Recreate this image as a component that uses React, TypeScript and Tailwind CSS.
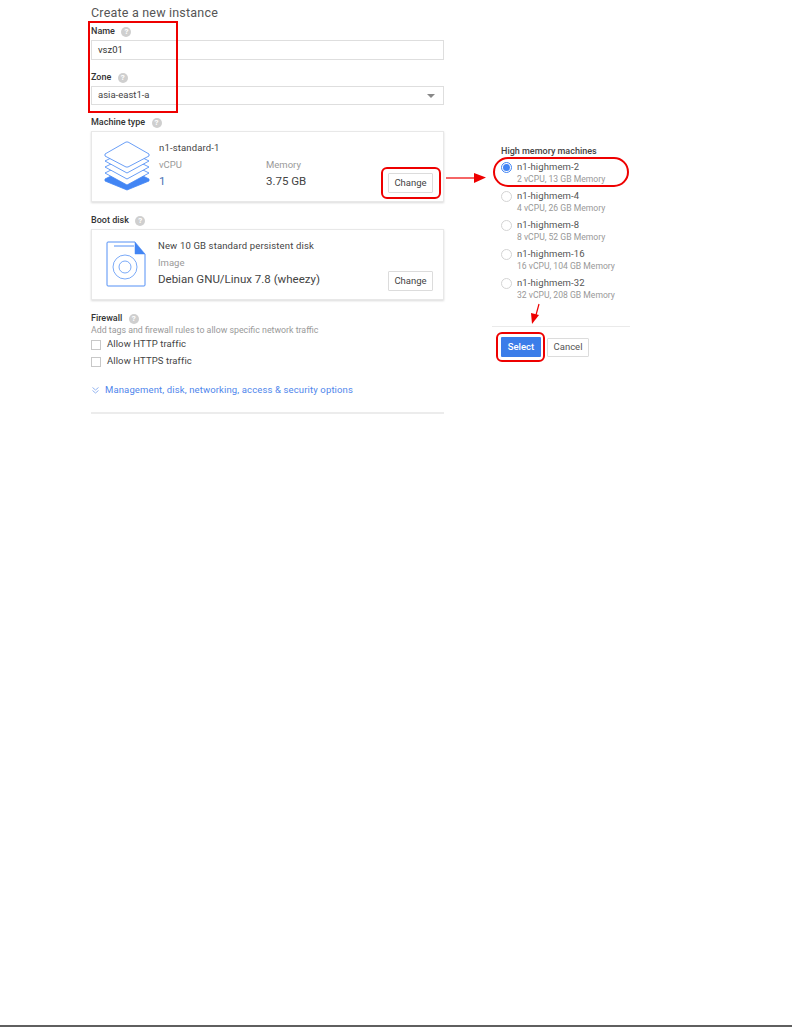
const FONT = "font-['Roboto',sans-serif]"

function Help() {
  return (
    <span className="flex size-[10px] items-center justify-center rounded-full bg-[#cfcfcf] text-[8px] leading-none font-bold text-white">
      ?
    </span>
  )
}

function FieldLabel({ text }: { text: string }) {
  return (
    <div className="flex h-[14px] items-center gap-[6.5px] pt-[2px] text-[9px] font-medium text-[#333]">
      <span>{text}</span>
      <Help />
    </div>
  )
}

function ChangeButton() {
  return (
    <button className="flex h-[20px] w-[45px] items-center justify-center rounded-[1px] border border-[#dcdcdc] bg-white text-[9.5px] text-[#444]">
      Change
    </button>
  )
}

function LayersIcon() {
  return (
    <svg width="46" height="50" viewBox="0 0 46 50" fill="none" stroke="#4285f4" strokeWidth="0.8" strokeLinejoin="round">
      <path d="M1 38 L23 27 L45 38 L45 40 L23 49 L1 40 Z" fill="#4285f4" />
      <path d="M1 32 L23 21 L45 32 L23 44 Z" fill="#fff" />
      <path d="M1 26 L23 15 L45 26 L23 38 Z" fill="#fff" />
      <path d="M1 20 L23 9 L45 20 L23 32 Z" fill="#fff" />
      <path d="M1 13 L22 1 L24 1 L45 13 L45 15 L24 26 L22 26 L1 15 Z" fill="#fff" />
    </svg>
  )
}

function DiskIcon() {
  return (
    <svg width="40" height="46" viewBox="0 0 40 46" fill="none" stroke="#4285f4">
      <path d="M29 1 L2 1 Q1 1 1 2 L1 44 Q1 45 2 45 L38 45 Q39 45 39 44 L39 13" strokeWidth="0.9" />
      <path d="M8 5 L28 5" strokeWidth="0.9" />
      <path d="M29 1 L39 13 L29 13 Z" fill="#4285f4" strokeWidth="0.5" />
      <circle cx="19" cy="26" r="12" strokeWidth="0.7" />
      <circle cx="19" cy="26" r="6" strokeWidth="0.7" />
    </svg>
  )
}

function Checkbox({ label }: { label: string }) {
  return (
    <div className="flex h-[11px] items-center gap-[6px] text-[9.5px] tracking-[0.1px] text-[#444]">
      <span className="size-[10px] border border-[#c8c8c8] bg-white" />
      <span>{label}</span>
    </div>
  )
}

const MACHINES = [
  { name: "n1-highmem-2", spec: "2 vCPU, 13 GB Memory", on: true },
  { name: "n1-highmem-4", spec: "4 vCPU, 26 GB Memory", on: false },
  { name: "n1-highmem-8", spec: "8 vCPU, 52 GB Memory", on: false },
  { name: "n1-highmem-16", spec: "16 vCPU, 104 GB Memory", on: false },
  { name: "n1-highmem-32", spec: "32 vCPU, 208 GB Memory", on: false },
]

export default function App() {
  return (
    <div className={`relative flex h-[1027px] w-[792px] overflow-hidden border-b-2 border-[#5f5f5f] bg-white ${FONT}`}>
      {/* left column: the form */}
      <div className="ml-[91px] flex w-[353px] flex-col pt-[5px]">
        <h1 className="h-[17px] text-[12.5px] leading-[16px] font-normal tracking-[0.2px] text-[#555]">Create a new instance</h1>
        <div className="mt-[2px]"><FieldLabel text="Name" /></div>
        <div className="mt-[2px] flex h-[20px] items-center border border-[#dedede] px-[6px] text-[9.5px] text-[#333]">vsz01</div>
        <div className="mt-[10px]"><FieldLabel text="Zone" /></div>
        <div className="mt-[2px] flex h-[19px] items-center justify-between border border-[#dedede] pr-[8px] pl-[6px] text-[9.5px] text-[#444]">
          <span>asia-east1-a</span>
          <span className="size-0 border-x-[4px] border-t-[4px] border-x-transparent border-t-[#888]" />
        </div>
        <div className="mt-[10px]"><FieldLabel text="Machine type" /></div>
        <div className="mt-[2px] flex h-[71px] border border-[#e8e8e8] shadow-[0_1px_2px_rgba(0,0,0,0.15)]">
          <div className="ml-[12px] pt-[9px]"><LayersIcon /></div>
          <div className="ml-[9px] flex flex-1 flex-col pt-[9px]">
            <div className="h-[14px] text-[9.5px] leading-[14px] tracking-[0.15px] text-[#444]">n1-standard-1</div>
            <div className="mt-[3px] flex text-[9.5px] leading-[14px] text-[#999]">
              <span className="w-[107px]">vCPU</span>
              <span>Memory</span>
            </div>
            <div className="mt-[2px] flex items-center text-[11.5px] leading-[14px] text-[#444]">
              <span className="w-[107px] text-[#3f6fb5]">1</span>
              <span>3.75 GB</span>
            </div>
          </div>
          <div className="mt-[41px] mr-[10px]"><ChangeButton /></div>
        </div>
        <div className="mt-[11px]"><FieldLabel text="Boot disk" /></div>
        <div className="mt-[2px] flex h-[71px] border border-[#e8e8e8] shadow-[0_1px_2px_rgba(0,0,0,0.15)]">
          <div className="ml-[14px] pt-[11px]"><DiskIcon /></div>
          <div className="ml-[12px] flex flex-1 flex-col pt-[9px]">
            <div className="h-[14px] text-[9.5px] leading-[14px] tracking-[0.15px] text-[#444]">New 10 GB standard persistent disk</div>
            <div className="mt-[3px] text-[9.5px] leading-[14px] text-[#999]">Image</div>
            <div className="mt-[2px] text-[11.5px] leading-[14px] text-[#444]">Debian GNU/Linux 7.8 (wheezy)</div>
          </div>
          <div className="mt-[41px] mr-[10px]"><ChangeButton /></div>
        </div>
        <div className="mt-[11px]"><FieldLabel text="Firewall" /></div>
        <div className="h-[11px] text-[8.8px] leading-[11px] text-[#999]">Add tags and firewall rules to allow specific network traffic</div>
        <div className="mt-[3px] flex flex-col gap-[6px]">
          <Checkbox label="Allow HTTP traffic" />
          <Checkbox label="Allow HTTPS traffic" />
        </div>
        <div className="mt-[16px] flex h-[14px] items-center gap-[5px] text-[9.5px] tracking-[0.13px] text-[#4f86ec]">
          <svg width="9" height="9" viewBox="0 0 9 9" fill="none" stroke="#7aa2ee" strokeWidth="0.8">
            <path d="M1.5 1.5 L4.5 4 L7.5 1.5 M1.5 4.5 L4.5 7 L7.5 4.5" />
          </svg>
          <span>Management, disk, networking, access &amp; security options</span>
        </div>
        <div className="mt-[15px] h-[2px] bg-[#ececec]" />
      </div>

      {/* right column: the machine picker */}
      <div className="ml-[48px] flex w-[138px] flex-col pt-[145px]">
        <div className="ml-[9px] h-[12px] text-[9px] leading-[12px] font-medium text-[#444]">High memory machines</div>
        <div className="mt-[4px] ml-[9px] flex flex-col gap-[5px]">
          {MACHINES.map(m => (
            <div key={m.name} className="flex h-[24px] gap-[5px]">
              {m.on ? (
                <span className="mt-[1px] flex size-[11px] items-center justify-center rounded-full border border-[#4285f4]">
                  <span className="size-[7px] rounded-full bg-[#4285f4]" />
                </span>
              ) : (
                <span className="mt-[1px] size-[11px] rounded-full border border-[#d4d4d4]" />
              )}
              <div className="flex flex-col">
                <span className="h-[12px] text-[9.5px] leading-[12px] tracking-[0.1px] text-[#555]">{m.name}</span>
                <span className="h-[12px] text-[8.6px] leading-[12px] text-[#999]">{m.spec}</span>
              </div>
            </div>
          ))}
        </div>
        <div className="mt-[25px] h-px bg-[#eaeaea]" />
        <div className="mt-[10px] ml-[9px] flex items-center gap-[6px]">
          <button className="flex h-[20px] w-[40px] items-center justify-center rounded-[1px] bg-[#3b7de9] text-[9.5px] font-medium text-white">Select</button>
          <button className="flex h-[19px] w-[42px] items-center justify-center rounded-[1px] border border-[#dcdcdc] bg-white text-[9.5px] text-[#555]">Cancel</button>
        </div>
      </div>

      {/* red annotations on top of the screenshot */}
      <div className="absolute top-[21px] left-[88px] h-[92px] w-[90px] border-2 border-[#ee0000]" />
      <div className="absolute top-[167px] left-[381px] h-[32px] w-[60px] rounded-[6px] border-2 border-[#ee0000]" />
      <div className="absolute top-[157px] left-[493px] h-[30px] w-[136px] rounded-[15px] border-2 border-[#ee0000]" />
      <div className="absolute top-[332px] left-[496px] h-[30px] w-[49px] rounded-[6px] border-2 border-[#ee0000]" />
      <svg className="absolute top-[170px] left-[445px]" width="42" height="16" viewBox="0 0 42 16">
        <path d="M1 8 L30 8" stroke="#ee0000" strokeWidth="1.2" />
        <path d="M29 3 L41 7.5 L29 13 Z" fill="#ee0000" />
      </svg>
      <svg className="absolute top-[303px] left-[528px]" width="14" height="22" viewBox="0 0 14 22">
        <path d="M11 1 L8 12" stroke="#ee0000" strokeWidth="1.2" />
        <path d="M3 10 L11 12 L4 21 Z" fill="#ee0000" />
      </svg>
    </div>
  )
}
